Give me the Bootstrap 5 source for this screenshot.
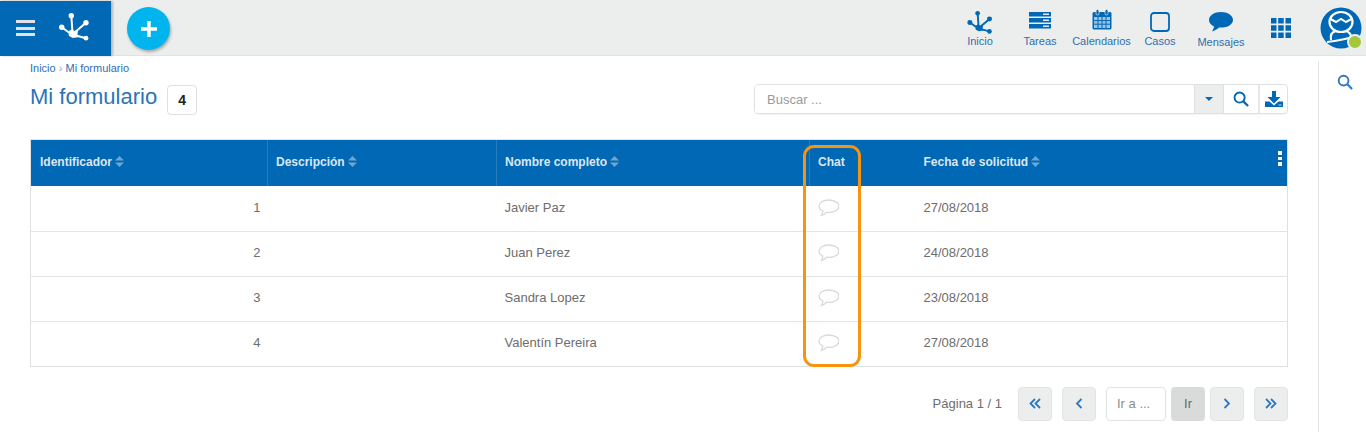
<!DOCTYPE html>
<html lang="es">
<head>
<meta charset="utf-8">
<title>Mi formulario</title>
<link href="https://cdn.jsdelivr.net/npm/bootstrap@5.3.0/dist/css/bootstrap.min.css" rel="stylesheet">
<style>
html,body{height:432px;overflow:hidden}
body{font-family:"Liberation Sans",Arial,sans-serif;color:#6d6d6d;background:#fff;font-size:12px}
.topbar{height:56px;background:#eceeee;border-bottom:1px solid #e1e3e3;padding-top:1px}
.brand-box{width:111px;height:55px;background:#0068b5;box-shadow:2px 0 2px rgba(0,0,0,.22);padding-left:16px;padding-right:0;gap:20px}
.burger{width:19px;height:16px;display:flex;flex-direction:column;justify-content:space-between;margin-top:-1px}
.burger i{display:block;height:3px;background:#dfe3e6}
.add-btn{width:43px;height:43px;border-radius:50%;background:#00b5ee;margin-left:16px;margin-top:6px;box-shadow:1px 2px 3px rgba(0,0,0,.3);border:0;padding:0}
.top-item{color:#2f6eb0;font-size:11px;line-height:12px;text-align:center;position:absolute;top:0;height:55px;transform:translateX(-50%);white-space:nowrap}
.top-item svg{position:absolute;left:50%;transform:translateX(-50%)}
.top-item span{position:absolute;left:50%;transform:translateX(-50%);top:34px}
.top-nav{position:relative;flex:1;height:55px}
.avatar-wrap{position:absolute;left:1320px;top:7px;width:42px;height:42px}
.presence{position:absolute;right:-1px;bottom:-1px;width:16px;height:16px;border-radius:50%;background:#a4c639;border:2px solid #eceeee}
.work{height:376px}
.content-col{width:1318px;padding-left:30px;padding-right:30px}
.side-col{width:48px;border-left:1px solid #e4e6e6;margin-top:5px;padding-top:13px;padding-left:18px}
.crumbs{color:#2f6eb0;font-size:11px;line-height:12px;padding-top:6px}
.crumbs b{font-weight:400;color:#8aa3bb}
.title-row{height:65px;padding-top:10px}
.page-title{color:#2a74b8;font-size:22px;font-weight:400;line-height:26px;margin:0}
.count-tag{width:30px;height:30px;border:1px solid #dfe1e1;border-radius:4px;color:#222;font-weight:700;font-size:14px;margin-left:10px;margin-top:1px}
.search-group{width:534px;height:30px;border:1px solid #dfe1e1;border-radius:4px;overflow:hidden;box-shadow:0 1px 1px rgba(0,0,0,.04)}
.search-input{border:0;outline:0;padding:1px 12px 0;flex:1;font-size:13px;color:#555;min-width:0;font-family:inherit}
.search-input::placeholder{color:#9a9a9a}
.caret-cell{width:29px;background:#eceeee;border-left:1px solid #dfe1e1}
.find-cell{width:35px;border-left:1px solid #dfe1e1}
.save-cell{width:29px;border-left:2px solid #e6e8e8}
.grid-wrap{position:relative;border-top:1px solid #e3e5e5}
.data-table{width:1258px;table-layout:fixed;border-collapse:collapse;margin:0;border:1px solid #dfe1e1;border-top:0}
.data-table th{background:#0068b5;color:#dbe7f2;font-size:12px;font-weight:700;height:46px;padding:0 9px 2px;border:0;vertical-align:middle;white-space:nowrap;position:relative}
.data-table th + th{padding-left:8px}
.data-table .col-line{border-left:1px solid #2a7dbd}
.data-table th.col-date{padding-left:9px}
.data-table td{height:45px;padding:0 9px 2px;font-size:13px;color:#6d6d6d;border:0;border-top:1px solid #e3e5e5;vertical-align:middle}
.data-table td + td{padding-left:8px}
.data-table td.cell-date{padding-left:9px}
.data-table td.id-cell{padding-right:7px}
.data-table tr:first-child td{border-top:0}
.sort-ico{display:inline-block;vertical-align:-1px;margin-left:3px}
.kebab{position:absolute;right:5px;top:11px;width:4px;display:flex;flex-direction:column;gap:2px}
.kebab i{display:block;height:3.5px;background:#fff}
.chat-mark{position:absolute;left:773px;top:5px;width:58px;height:222px;border:3px solid #f7940f;border-radius:11px;pointer-events:none}
.pager{height:60px;padding-top:20px;width:1258px}
.pager-label{margin-right:16px;font-size:13px;color:#6d6d6d;margin-top:-6px}
.pg-btn{width:34px;height:34px;background:#eceeee;border:1px solid #e2e4e4;border-radius:4px;padding:0}
.pg-gap{margin-right:10px}
.pg-input{width:60px;height:34px;border:1px solid #dfe1e1;border-radius:4px;font-size:13px;padding:0 10px;outline:0;font-family:inherit}
.pg-input::placeholder{color:#8c8c8c}
.pg-go{width:34px;height:34px;background:#d9dbdb;border:0;border-radius:4px;color:#666;font-size:13px;padding:0;margin:0 5px}
</style>
</head>
<body>
<header class="topbar d-flex align-items-start">
  <div class="brand-box d-flex align-items-center">
    <div class="burger"><i></i><i></i><i></i></div>
    <svg width="36" height="32" viewBox="0 0 36 32"><g stroke="#fff" stroke-width="2" fill="none"><path d="M16.300 2 17.500 20M6.700 14.200 14 19.500M31 9.800 19 20M31 25.200 19 22"/></g><path d="M13 18.500 16.500 16.500 19.500 18 23 16.500 22.500 22 24 24 18 25 14 23z" fill="#fff"/><circle cx="16.300" cy="2.800" r="2.700" fill="#fff"/><circle cx="6.700" cy="14.200" r="2.700" fill="#fff"/><circle cx="31" cy="9.800" r="2.700" fill="#fff"/><circle cx="31" cy="25.200" r="2.400" fill="#fff"/></svg>
  </div>
  <button class="add-btn d-flex align-items-center justify-content-center" type="button" aria-label="Agregar">
    <svg width="18" height="18" viewBox="0 0 18 18"><path d="M9 1v16M1 9h16" stroke="#fff" stroke-width="3.400"/></svg>
  </button>
  <nav class="top-nav">
    <div class="top-item" style="left:810px;width:40px">
      <svg style="top:10px;margin-left:-1.5px" width="29" height="26" viewBox="0 0 36 32"><g stroke="#0068b5" stroke-width="2.400" fill="none"><path d="M16.300 2 17.500 20M6.700 14.200 14 19.500M31 9.800 19 20M31 25.200 19 22"/></g><path d="M13 18.500 16.500 16.500 19.500 18 23 16.500 22.500 22 24 24 18 25 14 23z" fill="#0068b5"/><circle cx="16.300" cy="2.800" r="2.900" fill="#0068b5"/><circle cx="6.700" cy="14.200" r="3.100" fill="#0068b5"/><circle cx="31" cy="9.800" r="3.100" fill="#0068b5"/><circle cx="31" cy="25.200" r="2.900" fill="#0068b5"/></svg>
      <span>Inicio</span>
    </div>
    <div class="top-item" style="left:870px;width:40px">
      <svg style="top:11px" width="22" height="17" viewBox="0 0 22 17"><path d="M0 0h22v4.400H0zM0 6h22v4.400H0zM0 12h22v4.600H0z" fill="#0068b5"/><path d="M14 1.500h6v1.400h-6zM14 7.500h6v1.400h-6zM14 13.500h6v1.400h-6z" fill="#dfeaf3"/></svg>
      <span>Tareas</span>
    </div>
    <div class="top-item" style="left:931.500px;width:62px">
      <svg style="top:8px" width="20" height="21" viewBox="0 0 20 21"><rect x="0.500" y="3" width="19" height="17.500" rx="1.500" fill="#0068b5"/><rect x="2" y="8" width="16" height="11" fill="#9fc3e0"/><path d="M2 11.600h16M2 15.200h16M6 8v11M10 8v11M14 8v11" stroke="#0068b5" stroke-width="1"/><rect x="4" y="0.500" width="3" height="5.500" rx="1.500" fill="#0068b5" stroke="#eceeee" stroke-width=".7"/><rect x="13" y="0.500" width="3" height="5.500" rx="1.500" fill="#0068b5" stroke="#eceeee" stroke-width=".7"/></svg>
      <span>Calendarios</span>
    </div>
    <div class="top-item" style="left:990px;width:40px">
      <svg style="top:11px" width="20" height="20" viewBox="0 0 20 20"><rect x="1" y="1" width="18" height="18" rx="3" fill="none" stroke="#0068b5" stroke-width="1.800"/></svg>
      <span>Casos</span>
    </div>
    <div class="top-item" style="left:1051px;width:50px">
      <svg style="top:11px" width="24" height="20" viewBox="0 0 24 20"><path d="M12 0C5.400 0 0 3.500 0 8c0 2.700 2 5 5 6.400-.2 1.700-1 3.600-2 5 2.700-.6 5.400-2.200 7-3.900.7.100 1.300.1 2 .1 6.600 0 12-3.400 12-7.700C24 3.500 18.600 0 12 0z" fill="#0068b5"/></svg>
      <span style="top:35px">Mensajes</span>
    </div>
    <div class="top-item" style="left:1111px;width:22px">
      <svg style="top:17px" width="20" height="20" viewBox="0 0 20 20" fill="#0068b5"><path d="M0 0h5.500v5.500H0zM7.200 0h5.500v5.500H7.200zM14.500 0H20v5.500h-5.500zM0 7.200h5.500v5.500H0zM7.200 7.200h5.500v5.500H7.200zM14.500 7.200H20v5.500h-5.500zM0 14.500h5.500V20H0zM7.200 14.500h5.500V20H7.200zM14.500 14.500H20V20h-5.500z"/></svg>
    </div>
  </nav>
  <div class="avatar-wrap">
    <svg width="42" height="42" viewBox="0 0 42 42"><circle cx="21" cy="21" r="20.500" fill="#0068b5"/><ellipse cx="21" cy="15" rx="11.500" ry="10" fill="none" stroke="#fff" stroke-width="2.200"/><path d="M10.500 12 16 15l5-3 5 3 5.500-3" fill="none" stroke="#fff" stroke-width="2"/><path d="M11 33c-1-5 1-8 5-9M31 30c0-3-2-5-5-6" fill="none" stroke="#fff" stroke-width="2.200"/><path d="M7 35c8-1 16-2 25-5" stroke="#fff" stroke-width="2" fill="none"/></svg>
    <div class="presence"></div>
  </div>
</header>
<div class="work d-flex">
  <main class="content-col">
    <div class="crumbs">Inicio <b>›</b> Mi formulario</div>
    <div class="title-row d-flex justify-content-between align-items-start">
      <div class="d-flex align-items-start">
        <h1 class="page-title">Mi formulario</h1>
        <div class="count-tag d-flex align-items-center justify-content-center">4</div>
      </div>
      <div class="search-group d-flex">
        <input class="search-input" type="text" placeholder="Buscar ...">
        <div class="caret-cell d-flex align-items-center justify-content-center">
          <svg width="8" height="4" viewBox="0 0 8 4"><path d="M0 0h8L4 4z" fill="#0068b5"/></svg>
        </div>
        <div class="find-cell d-flex align-items-center justify-content-center">
          <svg width="16" height="16" viewBox="0 0 17 17"><circle cx="7" cy="7" r="5.400" fill="none" stroke="#0068b5" stroke-width="2"/><path d="M11 11l5 5" stroke="#0068b5" stroke-width="2.400"/></svg>
        </div>
        <div class="save-cell d-flex align-items-center justify-content-center">
          <svg width="18" height="17" viewBox="0 0 18 17"><path d="M7 0h4v6h4.500L9 12.500 2.500 6H7z" fill="#0068b5"/><path d="M0 10.500h4.500L9 14.500l4.500-4H18V16H0z" fill="#0068b5"/><path d="M13.500 13.500h3v1h-3z" fill="#cfe0ee"/></svg>
        </div>
      </div>
    </div>
    <div class="grid-wrap">
      <table class="table data-table">
        <colgroup><col style="width:237px"><col style="width:229px"><col style="width:313px"><col style="width:105px"><col></colgroup>
        <thead>
          <tr>
            <th>Identificador<svg class="sort-ico" width="9" height="11" viewBox="0 0 9 11" fill="#6ea5d2"><path d="M4.500 0 9 4.500H0zM0 6.500h9L4.500 11z"/></svg></th>
            <th class="col-line">Descripción<svg class="sort-ico" width="9" height="11" viewBox="0 0 9 11" fill="#6ea5d2"><path d="M4.500 0 9 4.500H0zM0 6.500h9L4.500 11z"/></svg></th>
            <th class="col-line">Nombre completo<svg class="sort-ico" width="9" height="11" viewBox="0 0 9 11" fill="#6ea5d2"><path d="M4.500 0 9 4.500H0zM0 6.500h9L4.500 11z"/></svg></th>
            <th class="col-line">Chat</th>
            <th class="col-date">Fecha de solicitud<svg class="sort-ico" width="9" height="11" viewBox="0 0 9 11" fill="#6ea5d2"><path d="M4.500 0 9 4.500H0zM0 6.500h9L4.500 11z"/></svg><div class="kebab"><i></i><i></i><i></i></div></th>
          </tr>
        </thead>
        <tbody>
          <tr><td class="text-end id-cell">1</td><td></td><td>Javier Paz</td><td><svg width="21" height="18" viewBox="0 0 21 18"><path d="M10.500 1C5.200 1 1 3.600 1 7c0 2.100 1.500 3.900 3.900 5-.1 1.500-.7 3.200-1.500 4.400 2.100-.5 4-1.900 5.200-3.200.9.200 1.700.2 2.900.2 5.200 0 9.500-2.800 9.500-6.400S15.800 1 10.500 1z" fill="#fff" stroke="#d8dada" stroke-width="1.300"/></svg></td><td class="cell-date">27/08/2018</td></tr>
          <tr><td class="text-end id-cell">2</td><td></td><td>Juan Perez</td><td><svg width="21" height="18" viewBox="0 0 21 18"><path d="M10.500 1C5.200 1 1 3.600 1 7c0 2.100 1.500 3.900 3.900 5-.1 1.500-.7 3.200-1.500 4.400 2.100-.5 4-1.900 5.200-3.200.9.200 1.700.2 2.900.2 5.200 0 9.500-2.800 9.500-6.400S15.800 1 10.500 1z" fill="#fff" stroke="#d8dada" stroke-width="1.300"/></svg></td><td class="cell-date">24/08/2018</td></tr>
          <tr><td class="text-end id-cell">3</td><td></td><td>Sandra Lopez</td><td><svg width="21" height="18" viewBox="0 0 21 18"><path d="M10.500 1C5.200 1 1 3.600 1 7c0 2.100 1.500 3.900 3.900 5-.1 1.500-.7 3.200-1.500 4.400 2.100-.5 4-1.900 5.200-3.200.9.200 1.700.2 2.900.2 5.200 0 9.500-2.800 9.500-6.400S15.800 1 10.500 1z" fill="#fff" stroke="#d8dada" stroke-width="1.300"/></svg></td><td class="cell-date">23/08/2018</td></tr>
          <tr><td class="text-end id-cell">4</td><td></td><td>Valentín Pereira</td><td><svg width="21" height="18" viewBox="0 0 21 18"><path d="M10.500 1C5.200 1 1 3.600 1 7c0 2.100 1.500 3.900 3.900 5-.1 1.500-.7 3.200-1.500 4.400 2.100-.5 4-1.900 5.200-3.200.9.200 1.700.2 2.900.2 5.200 0 9.500-2.800 9.500-6.400S15.800 1 10.500 1z" fill="#fff" stroke="#d8dada" stroke-width="1.300"/></svg></td><td class="cell-date">27/08/2018</td></tr>
        </tbody>
      </table>
      <div class="chat-mark"></div>
    </div>
    <div class="pager d-flex justify-content-end align-items-start">
      <span class="pager-label align-self-center">Página 1 / 1</span>
      <button class="pg-btn pg-gap d-flex align-items-center justify-content-center" type="button" aria-label="Primera"><svg width="12" height="11" viewBox="0 0 12 11"><path d="M6 1 1.500 5.500 6 10M11 1 6.500 5.500 11 10" fill="none" stroke="#2f78bd" stroke-width="1.800"/></svg></button>
      <button class="pg-btn pg-gap d-flex align-items-center justify-content-center" type="button" aria-label="Anterior"><svg width="8" height="11" viewBox="0 0 8 11"><path d="M6.500 1 2 5.500 6.500 10" fill="none" stroke="#2f78bd" stroke-width="1.800"/></svg></button>
      <input class="pg-input" type="text" placeholder="Ir a ...">
      <button class="pg-go" type="button">Ir</button>
      <button class="pg-btn pg-gap d-flex align-items-center justify-content-center" type="button" aria-label="Siguiente"><svg width="8" height="11" viewBox="0 0 8 11"><path d="M1.500 1 6 5.500 1.500 10" fill="none" stroke="#2f78bd" stroke-width="1.800"/></svg></button>
      <button class="pg-btn d-flex align-items-center justify-content-center" type="button" aria-label="Última"><svg width="12" height="11" viewBox="0 0 12 11"><path d="M1 1l4.500 4.500L1 10M6 1l4.500 4.500L6 10" fill="none" stroke="#2f78bd" stroke-width="1.800"/></svg></button>
    </div>
  </main>
  <aside class="side-col">
    <svg class="d-block" width="16" height="16" viewBox="0 0 17 17"><circle cx="7" cy="7" r="5.200" fill="none" stroke="#2f78bd" stroke-width="2"/><path d="M11 11l5 5" stroke="#2f78bd" stroke-width="2.200"/></svg>
  </aside>
</div>
<script src="https://cdn.jsdelivr.net/npm/bootstrap@5.3.0/dist/js/bootstrap.bundle.min.js"></script>
</body>
</html>
